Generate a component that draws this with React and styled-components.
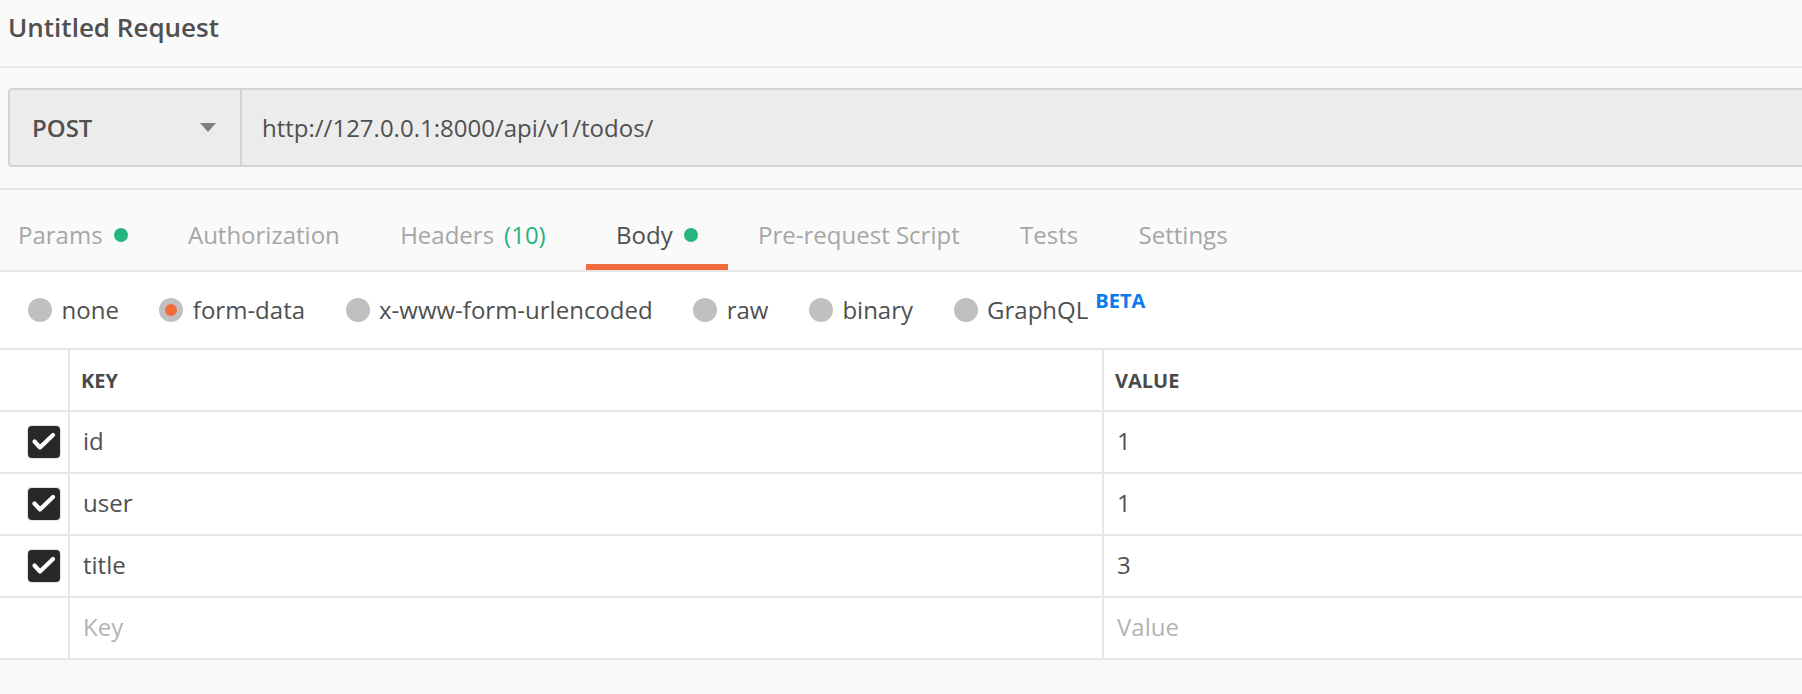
import React from "react";
import styled, { createGlobalStyle } from "styled-components";

const Global = createGlobalStyle`
  html, body {
    margin: 0;
    padding: 0;
    background: #fafafa;
  }
  body {
    font-family: "Open Sans", "Noto Sans", sans-serif;
    color: #505050;
    overflow: hidden;
  }
  *, *::before, *::after { box-sizing: border-box; }
`;

const Page = styled.div`
  width: 100%;
  min-height: 694px;
  background: #fafafa;
`;

const TitleBar = styled.header`
  height: 68px;
  padding: 9px 0 0 8px;
  border-bottom: 2px solid #e8e8e8;
  font-size: 26px;
  font-weight: 600;
  line-height: 36px;
  color: #505050;
`;

const UrlSection = styled.section`
  padding: 20px 0 21px 8px;
  border-bottom: 2px solid #e6e6e6;
  overflow: hidden;
`;

const UrlBox = styled.div`
  display: flex;
  height: 79px;
  margin-right: -12px;
  border: 2px solid #d4d4d4;
  border-radius: 4px;
  background: #ececec;
`;

const MethodSelect = styled.div`
  width: 232px;
  flex: none;
  display: flex;
  align-items: center;
  justify-content: space-between;
  padding: 0 24px 0 22px;
  border-right: 2px solid #d4d4d4;
  font-size: 24px;
  font-weight: 600;
  color: #505050;
`;

const UrlText = styled.div`
  flex: 1;
  display: flex;
  align-items: center;
  padding-left: 20px;
  font-size: 24px;
  color: #505050;
`;

const TabBar = styled.nav`
  display: flex;
  height: 82px;
  border-bottom: 2px solid #e6e6e6;
`;

const Tab = styled.div`
  display: flex;
  align-items: center;
  height: 80px;
  padding: 28px 30.2px 12px;
  line-height: 34px;
  font-size: 24px;
  color: ${(p) => (p.$active ? "#505050" : "#a6a6a6")};
  border-bottom: 6px solid ${(p) => (p.$active ? "#f26b3a" : "transparent")};
  white-space: nowrap;
  &:first-child {
    padding-left: 18px;
  }
`;

const Dot = styled.span`
  width: 14px;
  height: 14px;
  margin-left: 11px;
  border-radius: 50%;
  background: #26b47f;
`;

const Count = styled.span`
  margin: 0 10px 0 10px;
  color: #26b47f;
`;

const RadioRow = styled.div`
  display: flex;
  align-items: center;
  gap: 40.5px;
  height: 78px;
  padding-left: 28px;
  background: #fff;
  border-bottom: 2px solid #e6e6e6;
`;

const RadioOption = styled.label`
  display: flex;
  align-items: center;
  gap: 9.5px;
  font-size: 24px;
  line-height: 34px;
  color: #505050;
`;

const RadioCircle = styled.span`
  position: relative;
  width: 24px;
  height: 24px;
  flex: none;
  border-radius: 50%;
  background: #c0c0c0;
  ${(p) =>
    p.$checked &&
    `
    &::after {
      content: "";
      position: absolute;
      left: 6px;
      top: 6px;
      width: 12px;
      height: 12px;
      border-radius: 50%;
      background: #f26b3a;
    }
  `}
`;

const Beta = styled.span`
  margin-left: 7px;
  font-size: 20px;
  font-weight: 700;
  line-height: 0;
  vertical-align: 11px;
  color: #097bed;
`;

const Table = styled.div`
  background: #fff;
`;

const Row = styled.div`
  display: grid;
  grid-template-columns: 70px 1034px 1fr;
  height: 62px;
  border-bottom: 2px solid #e8e8e8;
`;

const Cell = styled.div`
  display: flex;
  align-items: center;
  padding: ${(p) => (p.$head ? "0 11px" : "0 13px 3px")};
  border-right: 2px solid #e8e8e8;
  font-size: ${(p) => (p.$head ? "20px" : "24px")};
  font-weight: ${(p) => (p.$head ? 700 : 400)};
  color: ${(p) => (p.$placeholder ? "#b3b3b3" : p.$head ? "#4a4a4a" : "#505050")};
  &:last-child {
    border-right: none;
  }
`;

const CheckCell = styled(Cell)`
  padding: 0 0 0 28px;
`;

const CheckBox = styled.span`
  display: flex;
  width: 32px;
  height: 32px;
  border-radius: 4px;
  background: #282828;
  box-shadow: 0 0 0 1px #e2e2e2;
`;

const Caret = () => (
  <svg width="16" height="9" viewBox="0 0 16 9">
    <polygon points="0,0 16,0 8,9" fill="#7f7f7f" />
  </svg>
);

const Check = () => (
  <CheckBox>
    <svg width="32" height="32" viewBox="0 0 32 32">
      <path
        d="M6.5 15.5 L12 21.5 L25 9"
        fill="none"
        stroke="#fff"
        strokeWidth="4.2"
        strokeLinecap="round"
        strokeLinejoin="round"
      />
    </svg>
  </CheckBox>
);

const radios = [
  { label: "none" },
  { label: "form-data", checked: true },
  { label: "x-www-form-urlencoded" },
  { label: "raw" },
  { label: "binary" },
  { label: "GraphQL", beta: true },
];

const rows = [
  { key: "id", value: "1" },
  { key: "user", value: "1" },
  { key: "title", value: "3" },
];

export default function App() {
  return (
    <Page>
      <Global />
      <TitleBar>Untitled Request</TitleBar>
      <UrlSection>
        <UrlBox>
          <MethodSelect>
            <span>POST</span>
            <Caret />
          </MethodSelect>
          <UrlText>http://127.0.0.1:8000/api/v1/todos/</UrlText>
        </UrlBox>
      </UrlSection>
      <TabBar>
        <Tab>
          Params<Dot />
        </Tab>
        <Tab>Authorization</Tab>
        <Tab>
          Headers<Count>(10)</Count>
        </Tab>
        <Tab $active>
          Body<Dot />
        </Tab>
        <Tab>Pre-request Script</Tab>
        <Tab>Tests</Tab>
        <Tab>Settings</Tab>
      </TabBar>
      <RadioRow>
        {radios.map((r) => (
          <RadioOption key={r.label}>
            <RadioCircle $checked={r.checked} />
            <span>
              {r.label}
              {r.beta && <Beta>BETA</Beta>}
            </span>
          </RadioOption>
        ))}
      </RadioRow>
      <Table>
        <Row>
          <Cell $head />
          <Cell $head>KEY</Cell>
          <Cell $head>VALUE</Cell>
        </Row>
        {rows.map((r) => (
          <Row key={r.key}>
            <CheckCell>
              <Check />
            </CheckCell>
            <Cell>{r.key}</Cell>
            <Cell>{r.value}</Cell>
          </Row>
        ))}
        <Row>
          <Cell />
          <Cell $placeholder>Key</Cell>
          <Cell $placeholder>Value</Cell>
        </Row>
      </Table>
    </Page>
  );
}
